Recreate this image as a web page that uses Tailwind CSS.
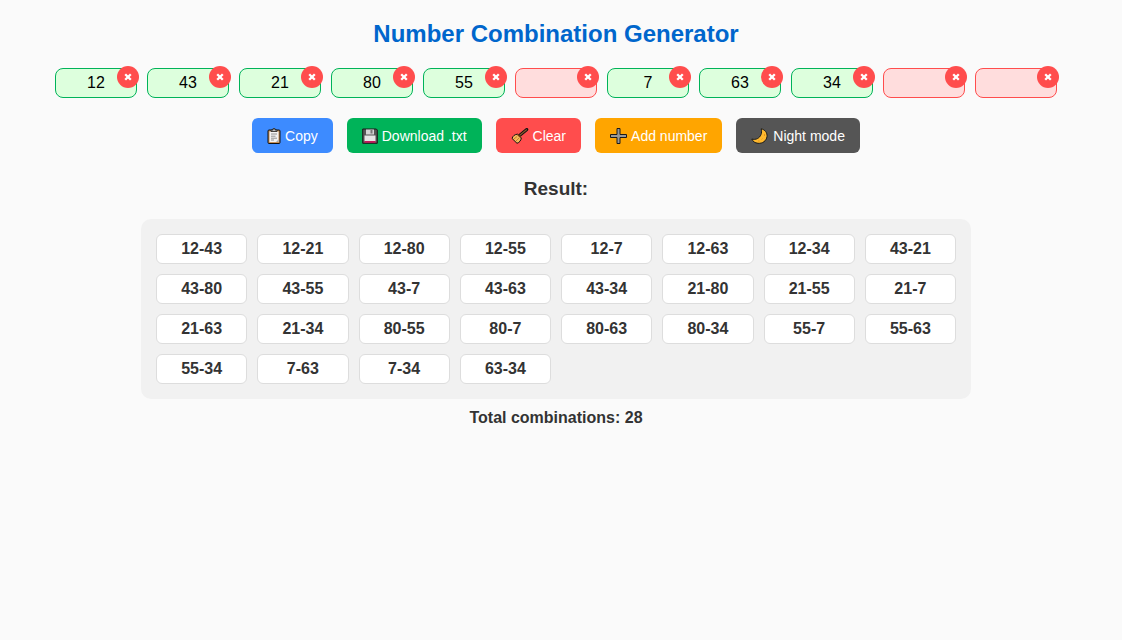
<!DOCTYPE html>
<html lang="en">
<head>
  <meta charset="UTF-8" />
  <meta name="viewport" content="width=device-width, initial-scale=1.0"/>
  <title>Number Combination Generator</title>
  <script src="https://cdn.jsdelivr.net/npm/@tailwindcss/browser@4"></script>
</head>
<body class="bg-[#fafafa] text-[#333] font-['Liberation_Sans',Arial,sans-serif] min-h-screen pt-5 pb-5 pl-5 pr-[30px] text-center">

  <h1 class="text-2xl leading-7 font-bold text-[#0066cc] mb-5">Number Combination Generator</h1>

  <!-- number fields -->
  <div id="inputs" class="flex flex-wrap justify-center gap-[10px] mb-5"></div>

  <!-- actions -->
  <div class="flex flex-wrap justify-center gap-[14px] text-sm text-white">
    <button onclick="copyResult()" class="flex items-center gap-1 h-[35px] px-[15px] rounded-md bg-[#3d8bff] cursor-pointer">
      <svg class="w-[14px] h-4" viewBox="0 0 14 16">
        <rect x="1" y="2" width="12" height="13.5" rx="1" fill="#c9925a" stroke="#111" />
        <rect x="2.5" y="3.5" width="9" height="10.5" fill="#f3f3f3" />
        <path d="M4 3.5V2h2V.6h2V2h2v1.5z" fill="#bbb" stroke="#222" stroke-width=".8" />
        <path d="M4 6h6M4 8.2h4.5M4 10.2h6M4 12h3" stroke="#888" stroke-width=".9" />
        <path d="M9 14l2.5-2.5V14z" fill="#aaa" />
      </svg>
      Copy
    </button>
    <button onclick="downloadResult()" class="flex items-center gap-1 h-[35px] px-[15px] rounded-md bg-[#00b359] cursor-pointer">
      <svg class="w-4 h-4" viewBox="0 0 16 16">
        <path d="M.7 1h13.6l1 1V15.300H.7z" fill="#555" stroke="#1a1a1a" />
        <rect x="4" y="1.500" width="8" height="5" fill="#d5d5d5" />
        <rect x="8.500" y="2" width="2" height="3.500" fill="#777" />
        <rect x="2.500" y="7.500" width="11" height="6" fill="#e6e6e6" />
        <rect x="2.500" y="13" width="11" height="1.800" fill="#c2185b" />
      </svg>
      Download .txt
    </button>
    <button onclick="clearNumbers()" class="flex items-center gap-1 h-[35px] px-[15px] rounded-md bg-[#ff4d4d] cursor-pointer">
      <svg class="w-[18px] h-4" viewBox="0 0 18 16">
        <path d="M8.500 7.500L15.800 1.500" stroke="#111" stroke-width="3" stroke-linecap="round" />
        <path d="M8.500 7.500L15.800 1.500" stroke="#8d5a2b" stroke-width="1.100" />
        <path d="M6.500 6.200l3.800 3.600c-.3 2.700-1.700 4.700-4.300 5.500L1 10.400c1-2.600 2.800-4 5.500-4.200z" fill="#f5b95a" stroke="#111" stroke-linejoin="round" />
        <path d="M3 11l3-2.500M5 13l3-3" stroke="#b67521" stroke-width=".8" />
        <path d="M6.500 6.500l3.500 3.300" stroke="#7a3c17" stroke-width="1.300" />
      </svg>
      Clear
    </button>
    <button onclick="addNumber('')" class="flex items-center gap-1 h-[35px] px-[15px] rounded-md bg-[#ffa500] cursor-pointer">
      <svg class="w-[17px] h-4" viewBox="0 0 17 16">
        <path d="M7 .5h3v6h6.500v3H10v6H7v-6H.5v-3H7z" fill="#999" stroke="#1a1a1a" />
      </svg>
      Add number
    </button>
    <button onclick="toggleNight()" class="flex items-center gap-1 h-[35px] px-[15px] rounded-md bg-[#555] cursor-pointer">
      <svg class="w-[18px] h-4" viewBox="0 0 18 16">
        <path d="M10.200 .8c3.800 .9 6.300 4 5.800 7.800-.6 4.300-4.400 7.100-9 6.700-3-.3-5.200-1.800-6.200-4.300 1.700.6 3.800.5 5.600-.4C9.700 8.900 11.400 5 10.200 .8z" fill="#ffb92e" stroke="#1a1a1a" stroke-linejoin="round" />
        <path d="M13.500 6v2M11.500 10.500l-1 1M7 13h1.500" stroke="#e8951a" />
      </svg>
      Night mode
    </button>
  </div>

  <h2 class="text-[19px] leading-6 font-bold mt-6 mb-[18px]">Result:</h2>

  <div id="result" class="grid grid-cols-4 md:grid-cols-8 gap-[10px] max-w-[830px] mx-auto p-[15px] rounded-[10px] bg-[#f1f1f1] font-bold"></div>

  <p id="total" class="mt-[9px] leading-5 font-bold"></p>

  <script>
    const inputs = document.getElementById('inputs');
    const result = document.getElementById('result');
    const total = document.getElementById('total');

    const baseClass = 'w-[82px] h-[30px] rounded-lg border text-center text-base text-black outline-none ';
    const filledClass = baseClass + 'bg-[#ddffdd] border-[#00b359]';
    const emptyClass = baseClass + 'bg-[#ffdddd] border-[#ff4d4d]';

    let combos = [];

    function addNumber(value) {
      const box = document.createElement('div');
      box.className = 'relative h-[30px]';
      box.innerHTML = `
        <input type="text" inputmode="numeric" aria-label="Number" />
        <button aria-label="Remove number" class="absolute -top-0.5 -right-0.5 flex items-center justify-center size-[22px] rounded-full bg-[#ff4d4d] cursor-pointer">
          <svg class="size-2" viewBox="0 0 8 8"><path d="M1.200 1.200l5.600 5.600M6.800 1.200l-5.600 5.600" stroke="#fff" stroke-width="2.300" /></svg>
        </button>`;
      const input = box.querySelector('input');
      input.value = value;
      input.addEventListener('input', update);
      box.querySelector('button').addEventListener('click', () => {
        box.remove();
        update();
      });
      inputs.appendChild(box);
      update();
    }

    function update() {
      const numbers = [];
      inputs.querySelectorAll('input').forEach(input => {
        const value = input.value.trim();
        input.className = value ? filledClass : emptyClass;
        if (value) numbers.push(value);
      });

      combos = [];
      for (let i = 0; i < numbers.length; i++) {
        for (let j = i + 1; j < numbers.length; j++) {
          combos.push(numbers[i] + '-' + numbers[j]);
        }
      }

      result.innerHTML = '';
      combos.forEach(combo => {
        const item = document.createElement('div');
        item.className = 'h-[30px] leading-7 rounded-md border border-[#ddd] bg-white text-[#333]';
        item.textContent = combo;
        result.appendChild(item);
      });
      total.textContent = 'Total combinations: ' + combos.length;
    }

    function copyResult() {
      navigator.clipboard.writeText(combos.join('\n'));
    }

    function downloadResult() {
      const link = document.createElement('a');
      link.href = URL.createObjectURL(new Blob([combos.join('\n')], { type: 'text/plain' }));
      link.download = 'combinations.txt';
      link.click();
    }

    function clearNumbers() {
      inputs.querySelectorAll('input').forEach(input => input.value = '');
      update();
    }

    function toggleNight() {
      document.body.classList.toggle('invert');
    }

    ['12', '43', '21', '80', '55', '', '7', '63', '34', '', ''].forEach(addNumber);
  </script>
</body>
</html>
